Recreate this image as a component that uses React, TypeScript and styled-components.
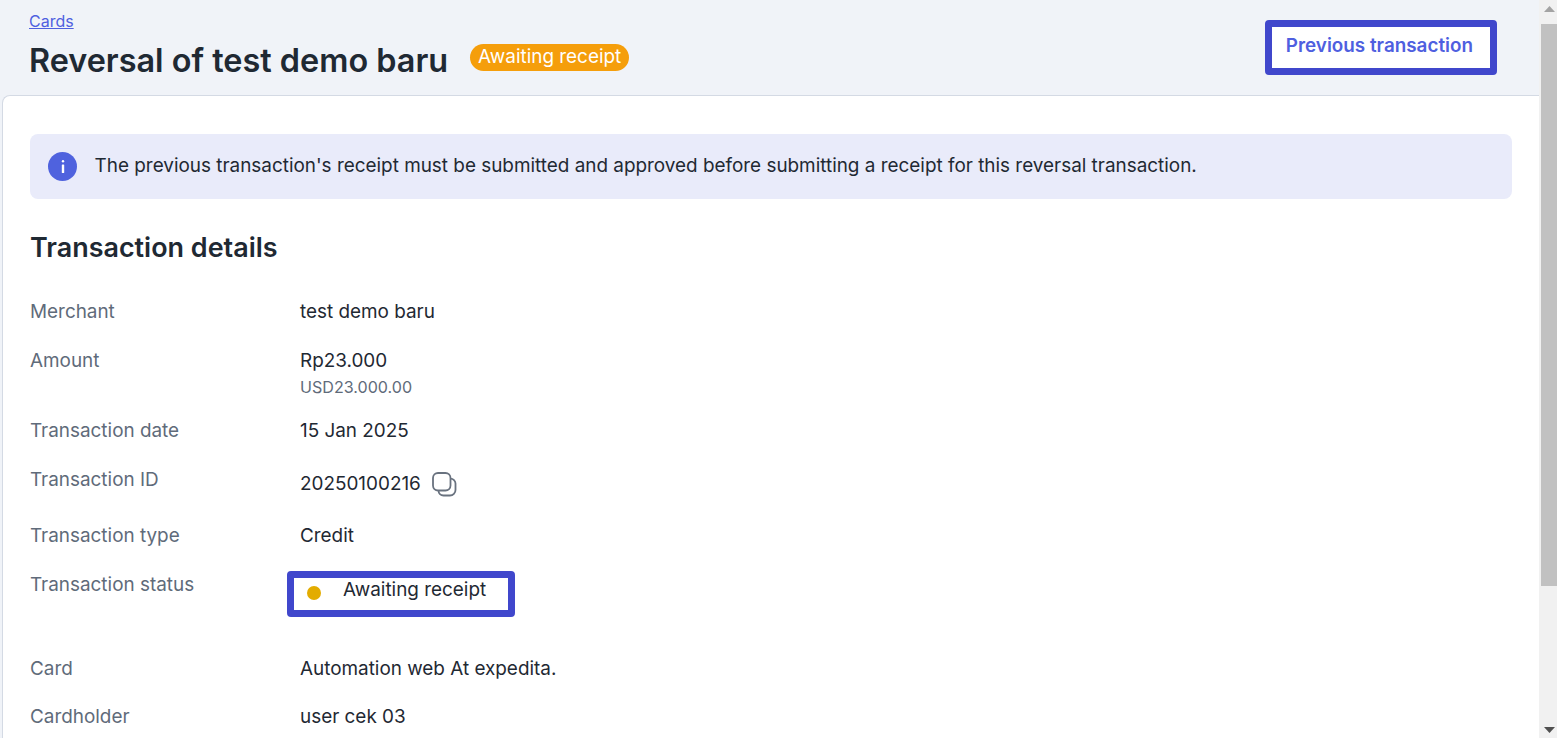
import { Fragment } from "react";
import styled, { createGlobalStyle } from "styled-components";

const GlobalStyle = createGlobalStyle`
  html, body {
    margin: 0;
    padding: 0;
    height: 100%;
    overflow: hidden;
  }
  body {
    font-family: Inter, "Liberation Sans", sans-serif;
    background: #f0f3f8;
    color: #1f2937;
  }
`;

const Page = styled.div`
  display: flex;
  height: 738px;
  overflow: hidden;
`;

const Main = styled.div`
  flex: 1;
  min-width: 0;
  display: flex;
  flex-direction: column;
`;

const Header = styled.header`
  height: 95px;
  flex: none;
  display: flex;
  justify-content: space-between;
  padding: 12px 42px 0 29px;
  box-sizing: border-box;
`;

const BreadcrumbLink = styled.a`
  display: block;
  font-size: 16px;
  line-height: 19px;
  color: #4f5fe0;
  text-decoration: underline;
`;

const TitleRow = styled.div`
  display: flex;
  align-items: flex-start;
  gap: 22px;
  margin-top: 6px;
`;

const Title = styled.h1`
  margin: 0;
  font-size: 32.4px;
  line-height: 48px;
  font-weight: 600;
  color: #1f2933;
`;

const Badge = styled.span`
  margin-top: 7px;
  padding: 0 8px;
  height: 27px;
  line-height: 26px;
  border-radius: 14px;
  background: #f59e0b;
  color: #fff;
  font-size: 18.9px;
`;

const Highlight = styled.div`
  border: 7px solid #4047cc;
  border-radius: 4px;
  background: #fff;
`;

const PreviousButton = styled(Highlight)`
  align-self: flex-start;
  margin-top: 8px;
  padding: 8px 17px 0 14px;
  height: 55px;
  box-sizing: border-box;
  color: #4f5fe0;
  font-size: 18.85px;
  font-weight: 600;
  line-height: 22px;
`;

const Card = styled.main`
  flex: 1;
  background: #fff;
  border: 1px solid #d4dae4;
  border-right: 0;
  border-bottom: 0;
  border-top-left-radius: 8px;
  margin-left: 2px;
  padding: 38px 27px 0 27px;
`;

const Notice = styled.div`
  display: flex;
  align-items: center;
  gap: 17.6px;
  height: 65px;
  padding: 0 18px 2px;
  box-sizing: border-box;
  border-radius: 8px;
  background: #e9ebfa;
  font-size: 18.9px;
  color: #1f2933;
`;

const InfoIcon = styled.span`
  flex: none;
  width: 29px;
  height: 29px;
  margin-top: 2px;
  border-radius: 50%;
  background: #4f62de;
  color: #fff;
  display: flex;
  align-items: center;
  justify-content: center;
`;

const SectionTitle = styled.h2`
  margin: 31.6px 0 35.4px;
  font-size: 26.95px;
  line-height: 34px;
  font-weight: 600;
  color: #1f2933;
`;

const DetailList = styled.dl`
  margin: 0;
  display: grid;
  grid-template-columns: 270px 1fr;
`;

const Label = styled.dt<{ $height: number }>`
  height: ${(p) => p.$height}px;
  font-size: 18.9px;
  line-height: 24px;
  color: #5f6b7a;
`;

const Value = styled.dd`
  margin: 0;
  font-size: 18.9px;
  line-height: 24px;
  color: #1f2933;
`;

const SubValue = styled.div`
  font-size: 16.1px;
  line-height: 28px;
  color: #5f6b7a;
`;

const IdRow = styled.div`
  display: flex;
  align-items: center;
  gap: 10px;
  margin-top: 3px;
`;

const StatusBox = styled(Highlight)`
  display: flex;
  align-items: center;
  width: 228px;
  height: 46px;
  box-sizing: border-box;
  margin: -2px 0 0 -13px;
  padding: 0 0 8px 13px;
  gap: 22px;
`;

const StatusDot = styled.span`
  flex: none;
  width: 14px;
  height: 14px;
  margin-top: 7px;
  border-radius: 50%;
  background: #e3ac00;
`;

const Scrollbar = styled.aside`
  flex: none;
  width: 18px;
  background: #f1f1f1;
  display: flex;
  flex-direction: column;
`;

const ScrollArrow = styled.div`
  flex: none;
  height: 17px;
  padding-left: 2px;
  display: flex;
  align-items: center;
  justify-content: center;
`;

const ScrollThumb = styled.div`
  height: 562px;
  margin: 7px 0 0 2px;
  background: #c1c1c1;
`;

const ScrollSpacer = styled.div`
  flex: 1;
`;

const rows = [
  { label: "Merchant", height: 49, value: "test demo baru" },
  { label: "Amount", height: 70, value: "Rp23.000", sub: "USD23.000.00" },
  { label: "Transaction date", height: 49, value: "15 Jan 2025" },
];

function CopyIcon() {
  return (
    <svg width="26" height="26" viewBox="0 0 26 26" fill="none" stroke="#69727f" strokeWidth="1.8">
      <rect x="2" y="2" width="17.5" height="17.5" rx="5" />
      <path d="M19.4 7.6h.1a5 5 0 0 1 5 5v6.4a5.5 5.5 0 0 1-5.5 5.5h-6.5a5 5 0 0 1-5-5" />
    </svg>
  );
}

function InfoGlyph() {
  return (
    <svg width="4" height="13" viewBox="0 0 4 13" fill="#fff">
      <rect x="0.8" y="0" width="2.4" height="2.4" rx="1.2" />
      <rect x="0.8" y="4.4" width="2.4" height="8.6" rx="0.6" />
    </svg>
  );
}

export default function App() {
  return (
    <>
      <GlobalStyle />
      <Page>
        <Main>
          <Header>
            <div>
              <BreadcrumbLink href="#">Cards</BreadcrumbLink>
              <TitleRow>
                <Title>Reversal of test demo baru</Title>
                <Badge>Awaiting receipt</Badge>
              </TitleRow>
            </div>
            <PreviousButton>Previous transaction</PreviousButton>
          </Header>
          <Card>
            <Notice>
              <InfoIcon><InfoGlyph /></InfoIcon>
              The previous transaction's receipt must be submitted and approved before submitting a receipt for this reversal transaction.
            </Notice>
            <SectionTitle>Transaction details</SectionTitle>
            <DetailList>
              {rows.map((row) => (
                <Fragment key={row.label}>
                  <Label $height={row.height}>{row.label}</Label>
                  <Value>
                    {row.value}
                    {row.sub ? <SubValue>{row.sub}</SubValue> : null}
                  </Value>
                </Fragment>
              ))}
              <Label $height={56}>Transaction ID</Label>
              <Value>
                <IdRow>
                  20250100216
                  <CopyIcon />
                </IdRow>
              </Value>
              <Label $height={49}>Transaction type</Label>
              <Value>Credit</Value>
              <Label $height={84}>Transaction status</Label>
              <Value>
                <StatusBox>
                  <StatusDot />
                  Awaiting receipt
                </StatusBox>
              </Value>
              <Label $height={48}>Card</Label>
              <Value>Automation web At expedita.</Value>
              <Label $height={48}>Cardholder</Label>
              <Value>user cek 03</Value>
            </DetailList>
          </Card>
        </Main>
        <Scrollbar>
          <ScrollArrow>
            <svg width="11" height="6" viewBox="0 0 11 6"><path d="M5.5 0 11 6H0z" fill="#a3a3a3" /></svg>
          </ScrollArrow>
          <ScrollThumb />
          <ScrollSpacer />
          <ScrollArrow>
            <svg width="11" height="6" viewBox="0 0 11 6"><path d="M0 0h11L5.5 6z" fill="#505050" /></svg>
          </ScrollArrow>
        </Scrollbar>
      </Page>
    </>
  );
}
